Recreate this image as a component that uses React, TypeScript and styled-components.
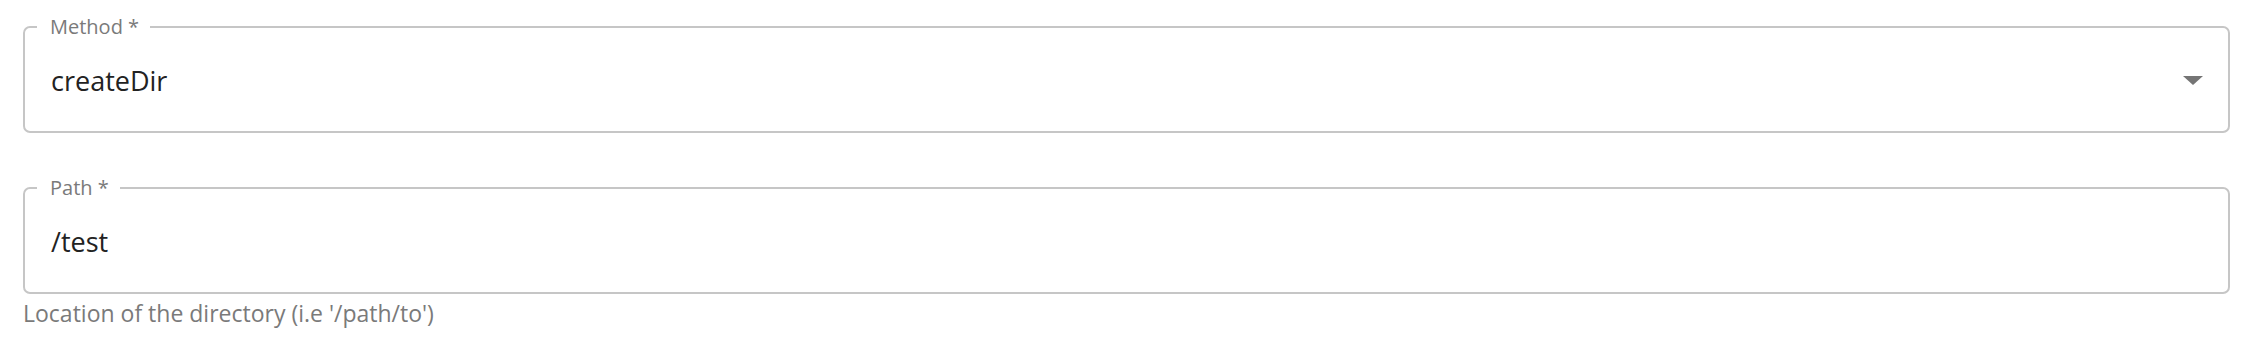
import styled, { createGlobalStyle } from "styled-components";

const GlobalStyle = createGlobalStyle`
  html, body {
    margin: 0;
    padding: 0;
    background: #ffffff;
  }
  body {
    font-family: "Open Sans", "Noto Sans", sans-serif;
  }
`;

const Form = styled.div`
  display: flex;
  flex-direction: column;
  gap: 44px;
  padding: 16px 28px 0 23px;
`;

const Field = styled.div`
  display: flex;
  flex-direction: column;
`;

const Outline = styled.fieldset`
  margin: 0;
  padding: 0 25px 0 26px;
  border: 2px solid #c6c6c6;
  border-radius: 7px;
  min-width: 0;
`;

const Legend = styled.legend`
  margin-left: -14px;
  padding: 0 11px 0 13px;
  font-size: 20px;
  line-height: 21px;
  color: #7a7a7a;
`;

const Row = styled.div`
  display: flex;
  align-items: center;
  box-sizing: border-box;
  height: 94px;
  padding-bottom: 7px;
`;

const Value = styled.span`
  flex: 1;
  font-size: 27px;
  color: #222222;
`;

const Arrow = styled.span`
  width: 0;
  height: 0;
  border-left: 10px solid transparent;
  border-right: 10px solid transparent;
  border-top: 9px solid #757575;
`;

const Helper = styled.div`
  margin-top: 3px;
  font-size: 23px;
  color: #7a7a7a;
`;

export default function App() {
  return (
    <>
      <GlobalStyle />
      <Form>
        <Field>
          <Outline>
            <Legend>Method *</Legend>
            <Row>
              <Value>createDir</Value>
              <Arrow />
            </Row>
          </Outline>
        </Field>
        <Field>
          <Outline>
            <Legend>Path *</Legend>
            <Row>
              <Value>/test</Value>
            </Row>
          </Outline>
          <Helper>Location of the directory (i.e '/path/to')</Helper>
        </Field>
      </Form>
    </>
  );
}
